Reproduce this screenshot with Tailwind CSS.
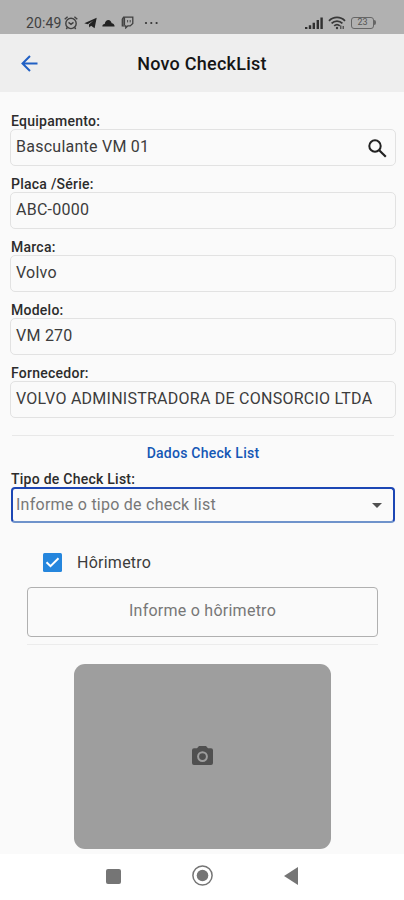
<!DOCTYPE html>
<html lang="pt-BR">
<head>
<meta charset="utf-8">
<meta name="viewport" content="width=device-width, initial-scale=1">
<title>Novo CheckList</title>
<script src="https://cdn.jsdelivr.net/npm/@tailwindcss/browser@4"></script>
</head>
<body class="w-[404px] h-[900px] overflow-hidden bg-[#fafafa] font-['Roboto',sans-serif] text-[#3c3c3c] flex flex-col">
  <!-- Status bar -->
  <div class="h-[34px] shrink-0 bg-[#b1b1b1] flex items-center pt-[11px] pl-[26px] pr-[28px] text-[#404040]">
    <span class="text-[14px] leading-none tracking-[0.1px]">20:49</span>
    <svg class="ml-[3px] w-[14px] h-[14px]" viewBox="0 0 14 14" fill="none" stroke="currentColor" stroke-width="1.4"><circle cx="7" cy="7.4" r="5.2"/><path d="M.7 3.2 3.6.8M13.300 3.2 10.400.8M4.500 6.400 7 8.400l2.500-2M3.300 11.500l-1 1.500M10.700 11.500l1 1.500"/></svg>
    <svg class="ml-[6px] w-[13px] h-[12px]" viewBox="0 0 13 12" fill="#222"><path d="M.3 6.2 12.7.8 10.6 11.2 7.1 8.7 5.3 10.5 4.9 7.5 9.5 3.6 3.7 7.2Z"/></svg>
    <svg class="ml-[5px] w-[13px] h-[8px]" viewBox="0 0 13 8" fill="#222"><path d="M.4 7.4C.2 5.700 1.300 4.800 2.700 4.900 3.200 2.500 4.600 1 6.300 1c1.900 0 2.900 1.300 3.400 3.200 1.800 0 2.900 1.400 2.900 3.200Z"/></svg>
    <svg class="ml-[6px] w-[13px] h-[13px]" viewBox="0 0 13 13" fill="none" stroke="currentColor" stroke-width="1.300"><path d="M2.600 1.200h9.200v6.200L9.200 9.900H6.800l-2 2V9.900H1.300V3.200Z"/><path d="M3.200 1.200v7.800" stroke-width="1.800"/><path d="M6.600 4v2.400M9.200 4v2.400" stroke-width=".9"/></svg>
    <svg class="ml-[10px] w-[15px] h-[4px]" viewBox="0 0 15 4" fill="#333"><circle cx="2" cy="2" r="1.100"/><circle cx="7.300" cy="2" r="1.100"/><circle cx="12.600" cy="2" r="1.100"/></svg>
    <svg class="ml-auto w-[18px] h-[12px]" viewBox="0 0 18 12" fill="#303030"><path d="M0 10h2.400v2H0ZM3.800 8.300h2.400V12H3.800ZM7.600 5.800H10V12H7.600ZM11.600 3H14v9h-2.400ZM15.400.5h2.400V12h-2.400Z"/></svg>
    <svg class="ml-[5px] w-[18px] h-[14px]" viewBox="0 0 18 14" fill="none" stroke="#383838" stroke-width="1.800"><path d="M1 4.800C5.500.2 12.500.2 17 4.800M3.600 7.400c3-3 7.800-3 10.800 0M6.200 9.900c1.600-1.500 4-1.500 5.600 0"/><circle cx="9" cy="12" r="1.200" fill="#383838" stroke="none"/><path d="M12.800 9.500v3.500M15.200 10v3" stroke-width="1.100"/></svg>
    <div class="ml-[5px] w-[23px] h-[12px] rounded-[3px] border-[1.5px] border-[#666] flex items-center justify-center text-[9px] leading-none text-[#555]">23</div>
    <div class="w-[2px] h-[5px] rounded-r bg-[#666]"></div>
  </div>

  <!-- App bar -->
  <header class="h-[58px] shrink-0 bg-[#eeeeee] relative flex items-center justify-center">
    <svg class="absolute left-[21px] top-[21px] w-[17px] h-[17px]" viewBox="0 0 17 17" fill="none" stroke="#2160c4" stroke-width="2"><path d="M16.500 8.500H2M9 1 1.500 8.500 9 16"/></svg>
    <h1 class="pt-[2px] text-[18px] leading-none font-medium text-[#151515] tracking-[0.25px]">Novo CheckList</h1>
  </header>

  <main class="flex-1 pt-[21px] pl-[10px] pr-[8px] flex flex-col tracking-[0.25px]">
    <div class="flex flex-col gap-[10px]">
      <div>
        <div class="h-4 pl-px text-[14px] leading-4 font-medium text-[#2c2c2c]">Equipamento:</div>
        <div class="h-[37px] rounded-[5px] border border-[#e2e2e2] pl-[5px] pr-[8px] flex items-center justify-between text-[16px] leading-none"><span class="pb-[2px]">Basculante VM 01</span>
          <svg class="mt-px w-[19px] h-[19px]" viewBox="0 0 19 19" fill="none" stroke="#222" stroke-width="2"><circle cx="7" cy="7" r="5.700"/><path d="m11.200 11.200 6.600 6.600" stroke-width="2.200"/></svg>
        </div>
      </div>
      <div>
        <div class="h-4 pl-px text-[14px] leading-4 font-medium text-[#2c2c2c]">Placa /Série:</div>
        <div class="h-[37px] rounded-[5px] border border-[#e2e2e2] pl-[5px] flex items-center text-[16px] leading-none"><span class="pb-[2px]">ABC-0000</span></div>
      </div>
      <div>
        <div class="h-4 pl-px text-[14px] leading-4 font-medium text-[#2c2c2c]">Marca:</div>
        <div class="h-[37px] rounded-[5px] border border-[#e2e2e2] pl-[5px] flex items-center text-[16px] leading-none"><span class="pb-[2px]">Volvo</span></div>
      </div>
      <div>
        <div class="h-4 pl-px text-[14px] leading-4 font-medium text-[#2c2c2c]">Modelo:</div>
        <div class="h-[37px] rounded-[5px] border border-[#e2e2e2] pl-[5px] flex items-center text-[16px] leading-none"><span class="pb-[2px]">VM 270</span></div>
      </div>
      <div>
        <div class="h-4 pl-px text-[14px] leading-4 font-medium text-[#2c2c2c]">Fornecedor:</div>
        <div class="h-[37px] rounded-[5px] border border-[#e2e2e2] pl-[5px] flex items-center text-[16px] leading-none whitespace-nowrap"><span class="pb-[2px]">VOLVO ADMINISTRADORA DE CONSORCIO LTDA</span></div>
      </div>
    </div>

    <div class="mt-[17px] mx-[2px] h-px bg-[#e8e8e8]"></div>
    <h2 class="mt-[9px] h-4 text-center text-[14px] leading-4 font-medium text-[#1557b5]">Dados Check List</h2>

    <div class="mt-[10px] h-4 pl-px text-[14px] leading-4 font-medium text-[#2c2c2c]">Tipo de Check List:</div>
    <div class="ml-px mr-px h-[36px] rounded-[4px] border-2 border-[#1c46b4] border-b-[#6f93cb] pl-[3px] pr-[11px] flex items-center justify-between text-[16px] leading-none text-[#777]">
      <span class="pb-px">Informe o tipo de check list</span>
      <svg class="w-[10px] h-[5px]" viewBox="0 0 10 5" fill="#505050"><path d="M0 0h10L5 5Z"/></svg>
    </div>

    <div class="mt-[30px] ml-[33px] h-[19px] flex items-center gap-[15px]">
      <svg class="w-[19px] h-[19px]" viewBox="0 0 19 19"><rect width="19" height="19" rx="1.500" fill="#2586dd"/><path d="m3.500 9.200 4 4 8-8" fill="none" stroke="#fff" stroke-width="2"/></svg>
      <span class="text-[16px] leading-none">Hôrimetro</span>
    </div>
    <div class="mt-[15px] ml-[17px] mr-[18px] h-[50px] rounded-[4px] border border-[#b0b0b0] flex items-center justify-center text-[16px] leading-none text-[#777]"><span class="pb-[2px]">Informe o hôrimetro</span></div>
    <div class="mt-[7px] ml-[17px] mr-[18px] h-px bg-[#ececec]"></div>

    <div class="mt-[19px] ml-[64px] w-[257px] h-[185px] rounded-[11px] bg-[#9e9e9e] flex items-center justify-center pb-[2px]">
      <svg class="w-[21px] h-[19px]" viewBox="0 0 21 19"><path d="M7 0h7l2 2.200h3A2 2 0 0 1 21 4.200V17a2 2 0 0 1-2 2H2a2 2 0 0 1-2-2V4.200a2 2 0 0 1 2-2h3Z" fill="#505050"/><circle cx="10.500" cy="10.600" r="4.400" fill="none" stroke="#9e9e9e" stroke-width="2"/></svg>
    </div>
  </main>

  <!-- System navigation -->
  <nav class="h-[46px] shrink-0 bg-white flex items-start pt-[11px] pl-[106px] text-[#757575]">
    <svg class="mt-[4px] w-[15px] h-[15px]" viewBox="0 0 15 15"><rect width="15" height="15" rx="2" fill="currentColor"/></svg>
    <svg class="ml-[71px] w-[21px] h-[21px]" viewBox="0 0 21 21"><circle cx="10.500" cy="10.500" r="9.600" fill="none" stroke="currentColor" stroke-width="1.500"/><circle cx="10.500" cy="10.500" r="5.800" fill="currentColor"/></svg>
    <svg class="ml-[71px] mt-[2px] w-[14px] h-[18px]" viewBox="0 0 14 18"><path d="M14 0v18L0 9Z" fill="currentColor"/></svg>
  </nav>
</body>
</html>
